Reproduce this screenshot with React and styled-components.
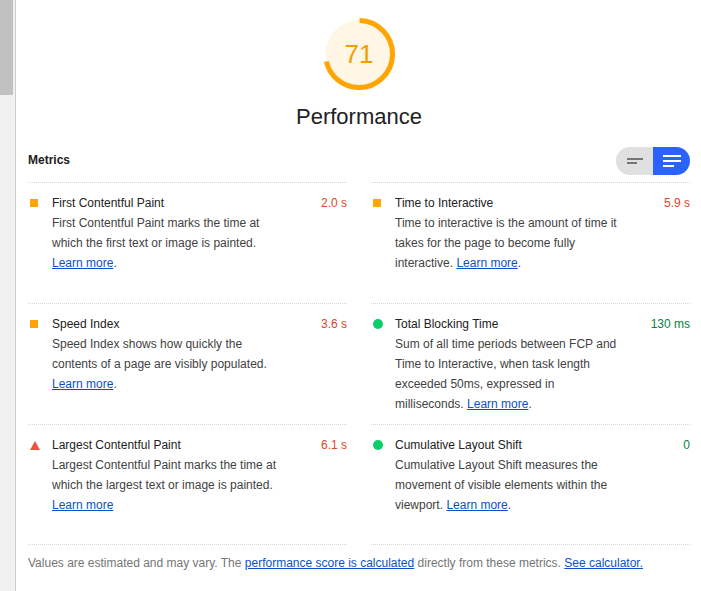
import React from 'react';
import styled, { createGlobalStyle } from 'styled-components';

const GlobalStyle = createGlobalStyle`
  body {
    margin: 0;
    background: #ffffff;
    font-family: "Liberation Sans", Arial, sans-serif;
  }
`;

const Page = styled.div`
  display: flex;
  min-height: 591px;
`;

const ScrollTrack = styled.div`
  width: 15px;
  flex-shrink: 0;
  background: #f1f1f1;
  border-right: 1px solid #cdcdcd;
`;

const ScrollThumb = styled.div`
  width: 13px;
  height: 95px;
  background: #c1c1c1;
`;

const Content = styled.div`
  flex: 1;
  padding: 0 11px 0 12px;
`;

const GaugeWrap = styled.div`
  display: flex;
  flex-direction: column;
  align-items: center;
  padding-top: 18px;
`;

const Gauge = styled.div`
  display: grid;
  width: 72px;
  height: 72px;

  & > * {
    grid-area: 1 / 1;
  }
`;

const GaugeNumber = styled.div`
  display: flex;
  align-items: center;
  justify-content: center;
  font-size: 26px;
  color: #f59c00;
  padding-top: 1px;
`;

const GaugeLabel = styled.div`
  margin-top: 14px;
  font-size: 22px;
  line-height: 26px;
  color: #212121;
`;

const Header = styled.div`
  display: flex;
  align-items: center;
  justify-content: space-between;
  height: 28px;
  margin: 17px 0 7px;
`;

const HeaderTitle = styled.div`
  font-size: 12px;
  font-weight: bold;
  color: #212121;
  margin-top: -2px;
`;

const Toggle = styled.div`
  display: flex;
  width: 74px;
  height: 28px;
  border-radius: 14px;
  overflow: hidden;
`;

const ToggleHalf = styled.div`
  flex: 1;
  display: flex;
  align-items: center;
  justify-content: center;
  background: ${(p) => (p.active ? '#2a63fb' : '#e0e0e0')};
`;

const Grid = styled.div`
  display: grid;
  grid-template-columns: 1fr 1fr;
  grid-auto-rows: 1fr;
  column-gap: 24px;
`;

const Metric = styled.div`
  display: grid;
  grid-template-columns: 24px 1fr auto;
  grid-template-rows: 20px auto;
  align-content: start;
  padding: 10px 0 10px;
  border-top: 1px dotted #d6d6d6;
  border-bottom: ${(p) => (p.last ? '1px dotted #d6d6d6' : 'none')};
  font-size: 12px;
  line-height: 20px;
`;

const IconCell = styled.div`
  display: flex;
  align-items: center;
  padding-left: 2px;
`;

const Square = styled.span`
  width: 8px;
  height: 8px;
  background: #ffa400;
`;

const Dot = styled.span`
  width: 10px;
  height: 10px;
  border-radius: 50%;
  background: #0cce6b;
`;

const MetricTitle = styled.div`
  color: #212121;
`;

const MetricValue = styled.div`
  color: ${(p) => (p.status === 'pass' ? '#0b8043' : '#e0451f')};
  text-align: right;
`;

const MetricDesc = styled.div`
  grid-column: 2 / 3;
  max-width: 226px;
  color: #424242;
`;

const Link = styled.a`
  color: #0c50c7;
  text-decoration: underline;
`;

const Footer = styled.div`
  padding-top: 8px;
  font-size: 12px;
  line-height: 20px;
  color: #757575;
`;

const Icon = ({ status }) => {
  if (status === 'pass') return <Dot />;
  if (status === 'fail')
    return (
      <svg width="10" height="9" viewBox="0 0 10 9">
        <polygon points="5,0 10,9 0,9" fill="#e9553a" />
      </svg>
    );
  return <Square />;
};

const metrics = [
  {
    title: 'First Contentful Paint',
    value: '2.0 s',
    status: 'average',
    desc: 'First Contentful Paint marks the time at which the first text or image is painted.',
    dot: true,
  },
  {
    title: 'Time to Interactive',
    value: '5.9 s',
    status: 'average',
    desc: 'Time to interactive is the amount of time it takes for the page to become fully interactive.',
    dot: true,
  },
  {
    title: 'Speed Index',
    value: '3.6 s',
    status: 'average',
    desc: 'Speed Index shows how quickly the contents of a page are visibly populated.',
    dot: true,
  },
  {
    title: 'Total Blocking Time',
    value: '130 ms',
    status: 'pass',
    desc: 'Sum of all time periods between FCP and Time to Interactive, when task length exceeded 50ms, expressed in milliseconds.',
    dot: true,
  },
  {
    title: 'Largest Contentful Paint',
    value: '6.1 s',
    status: 'fail',
    desc: 'Largest Contentful Paint marks the time at which the largest text or image is painted.',
    dot: false,
  },
  {
    title: 'Cumulative Layout Shift',
    value: '0',
    status: 'pass',
    desc: 'Cumulative Layout Shift measures the movement of visible elements within the viewport.',
    dot: true,
  },
];

const R = 33.5;
const CIRC = 2 * Math.PI * R;

export default function App() {
  return (
    <>
      <GlobalStyle />
      <Page>
        <ScrollTrack>
          <ScrollThumb />
        </ScrollTrack>
        <Content>
          <GaugeWrap>
            <Gauge>
              <svg width="72" height="72" viewBox="0 0 72 72">
                <circle cx="36" cy="36" r={R} fill="#fff6e5" />
                <circle
                  cx="36"
                  cy="36"
                  r={R}
                  fill="none"
                  stroke="#ffa400"
                  strokeWidth="5"
                  strokeDasharray={`${CIRC * 0.71} ${CIRC}`}
                  transform="rotate(-89 36 36)"
                />
              </svg>
              <GaugeNumber>71</GaugeNumber>
            </Gauge>
            <GaugeLabel>Performance</GaugeLabel>
          </GaugeWrap>

          <Header>
            <HeaderTitle>Metrics</HeaderTitle>
            <Toggle>
              <ToggleHalf>
                <svg width="18" height="8" viewBox="0 0 18 8">
                  <rect x="1" y="1" width="16" height="2" fill="#757575" />
                  <rect x="1" y="5" width="10" height="2" fill="#757575" />
                </svg>
              </ToggleHalf>
              <ToggleHalf active>
                <svg width="20" height="14" viewBox="0 0 20 14">
                  <rect x="1" y="1" width="18" height="2" fill="#ffffff" />
                  <rect x="1" y="6" width="18" height="2" fill="#ffffff" />
                  <rect x="1" y="11" width="11" height="2" fill="#ffffff" />
                </svg>
              </ToggleHalf>
            </Toggle>
          </Header>

          <Grid>
            {metrics.map((m, i) => (
              <Metric key={m.title} last={i >= 4}>
                <IconCell>
                  <Icon status={m.status} />
                </IconCell>
                <MetricTitle>{m.title}</MetricTitle>
                <MetricValue status={m.status}>{m.value}</MetricValue>
                <MetricDesc>
                  {m.desc} <Link href="#">Learn more</Link>
                  {m.dot ? '.' : ''}
                </MetricDesc>
              </Metric>
            ))}
          </Grid>

          <Footer>
            Values are estimated and may vary. The{' '}
            <Link href="#">performance score is calculated</Link> directly from these
            metrics. <Link href="#">See calculator.</Link>
          </Footer>
        </Content>
      </Page>
    </>
  );
}
